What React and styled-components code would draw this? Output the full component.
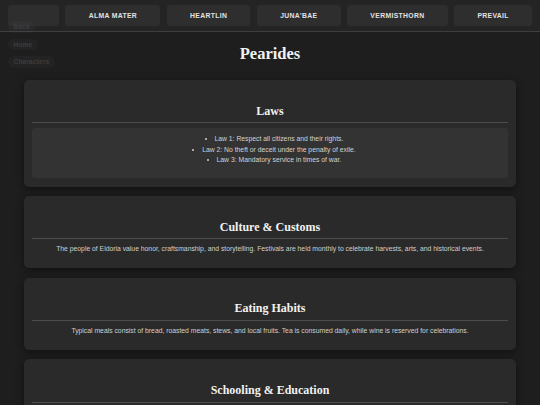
import React from "react";
import styled, { createGlobalStyle } from "styled-components";

const Global = createGlobalStyle`
  html, body {
    margin: 0;
    padding: 0;
    background: #1e1e1e;
    font-family: "Liberation Sans", Arial, sans-serif;
    color: #d0d0d0;
    overflow: hidden;
  }
  * { box-sizing: border-box; }
`;

const Header = styled.header`
  display: flex;
  gap: 6.5px;
  padding: 5px 8px;
  height: 32px;
  background: #242424;
  border-bottom: 1px solid #3e3e3e;
`;

const NavButton = styled.button`
  flex: 1 1 auto;
  height: 21px;
  padding: 0;
  border: none;
  border-radius: 3px;
  background: #2e2e2e;
  color: #e2e2e2;
  font-family: "Liberation Sans", Arial, sans-serif;
  font-weight: 700;
  font-size: 6.8px;
  letter-spacing: 0.35px;
  text-transform: uppercase;
  display: flex;
  align-items: center;
  justify-content: center;
`;

const Spacer = styled.span`
  display: inline-block;
  width: ${(p) => p.$w}px;
`;

const SideNav = styled.nav`
  position: absolute;
  left: 8px;
  top: 21px;
  display: flex;
  flex-direction: column;
  align-items: flex-start;
  gap: 6px;
`;

const Pill = styled.a`
  display: flex;
  align-items: center;
  height: 11.5px;
  padding: 0 5.5px;
  border-radius: 6px;
  background: rgba(255, 255, 255, 0.025);
  color: #3d3d3d;
  font-family: "Liberation Sans", Arial, sans-serif;
  font-weight: 700;
  font-size: 6.5px;
  letter-spacing: 0.2px;
`;

const Main = styled.main`
  padding: 0 24px;
`;

const Title = styled.h1`
  margin: 12.2px 0 16.8px;
  font-family: "Liberation Serif", "Times New Roman", serif;
  font-weight: 700;
  font-size: 16.5px;
  line-height: 19px;
  text-align: center;
  color: #f2f2f2;
`;

const Cards = styled.div`
  display: flex;
  flex-direction: column;
  gap: 9.4px;
`;

const Card = styled.section`
  background: #2a2a2a;
  border-radius: 5px;
  padding: 0 8px 8.4px;
  box-shadow: 0 2px 8px rgba(0, 0, 0, 0.45);
`;

const CardTitle = styled.h2`
  margin: 23.6px 0 0;
  padding-bottom: 4.6px;
  border-bottom: 1px solid #4c4c4c;
  font-family: "Liberation Serif", "Times New Roman", serif;
  font-weight: 700;
  font-size: 12px;
  line-height: 14px;
  text-align: center;
  color: #f2f2f2;
`;

const ListBox = styled.div`
  margin-top: 4.4px;
  padding: 6.25px 0 12.3px;
  background: #333333;
  border-radius: 3px;
`;

const List = styled.ul`
  margin: 0;
  padding: 0 0 0 8px;
  list-style-position: inside;
  text-align: center;
`;

const Item = styled.li`
  font-size: 6.8px;
  line-height: 10.7px;
  color: #d2d2d2;
`;

const Text = styled.p`
  margin: 5.8px 0 6.9px;
  font-size: 6.8px;
  line-height: 8px;
  text-align: center;
  color: #cfcfcf;
`;

const navItems = ["Alma Mater", "Heartlin", "Juna'bae", "Vermisthorn", "Prevail"];

const sections = [
  {
    title: "Culture & Customs",
    text:
      "The people of Eldoria value honor, craftsmanship, and storytelling. Festivals are held monthly to celebrate harvests, arts, and historical events.",
  },
  {
    title: "Eating Habits",
    text:
      "Typical meals consist of bread, roasted meats, stews, and local fruits. Tea is consumed daily, while wine is reserved for celebrations.",
  },
  {
    title: "Schooling & Education",
    text:
      "Children attend village schools from age six, learning reading, writing, arithmetic, and the history of the realm.",
  },
];

export default function App() {
  return (
    <>
      <Global />
      <Header>
        <NavButton aria-label="menu">
          <Spacer $w={4.5} />
        </NavButton>
        {navItems.map((n) => (
          <NavButton key={n}>{n}</NavButton>
        ))}
      </Header>
      <SideNav>
        <Pill>Back</Pill>
        <Pill>Home</Pill>
        <Pill>Characters</Pill>
      </SideNav>
      <Main>
        <Title>Pearides</Title>
        <Cards>
          <Card>
            <CardTitle>Laws</CardTitle>
            <ListBox>
              <List>
                <Item>Law 1: Respect all citizens and their rights.</Item>
                <Item>Law 2: No theft or deceit under the penalty of exile.</Item>
                <Item>Law 3: Mandatory service in times of war.</Item>
              </List>
            </ListBox>
          </Card>
          {sections.map((s) => (
            <Card key={s.title}>
              <CardTitle>{s.title}</CardTitle>
              <Text>{s.text}</Text>
            </Card>
          ))}
        </Cards>
      </Main>
    </>
  );
}
